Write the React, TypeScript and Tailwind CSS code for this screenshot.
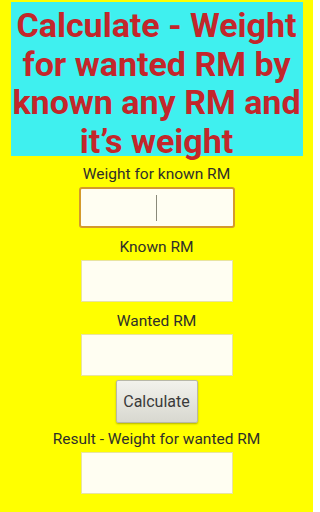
export default function App() {
  const font = { fontFamily: "Roboto, 'Noto Sans', sans-serif" };
  return (
    <div
      className="w-[313px] h-[512px] bg-[#ffff00] flex flex-col items-center overflow-hidden"
      style={font}
    >
      {/* Title */}
      <div className="mt-[2px] w-[292px] h-[154px] bg-[#3ff0ef] flex justify-center pt-[4px]">
        <h1 className="w-[300px] shrink-0 text-[34px] leading-[38.5px] font-bold text-[#c3262b] text-center">
          Calculate - Weight for wanted RM by known any RM and it’s weight
        </h1>
      </div>

      <Label text="Weight for known RM" className="mt-[8px]" />
      <div className="mt-[3px] w-[156px] h-[41px] rounded-[3px] border-2 border-[#d49a2c] bg-[#fffef2] flex items-center justify-center">
        <div className="w-px h-[26px] bg-[#8a8a7a]" />
      </div>

      <Label text="Known RM" className="mt-[9px]" />
      <Field className="mt-[3px]" />

      <Label text="Wanted RM" className="mt-[9px]" />
      <Field className="mt-[3px]" />

      <button className="mt-[4px] w-[82px] h-[43px] rounded-[2px] border border-[#b8b8a8] bg-gradient-to-b from-[#f2f2ec] to-[#d8d8d0] text-[16px] text-[#3a3a3a] shadow-[0_1px_2px_rgba(0,0,0,0.3)]">
        Calculate
      </button>

      <Label text="Result - Weight for wanted RM" className="mt-[6px]" />
      <Field className="mt-[3px]" />
    </div>
  );
}

function Label({ text, className }: { text: string; className?: string }) {
  return (
    <div className={`text-[15.5px] leading-[20px] text-[#2f2f2a] ${className ?? ""}`}>
      {text}
    </div>
  );
}

function Field({ className }: { className?: string }) {
  return (
    <div
      className={`w-[152px] h-[42px] border border-[#e8e4a0] bg-[#fffef2] ${className ?? ""}`}
    />
  );
}
